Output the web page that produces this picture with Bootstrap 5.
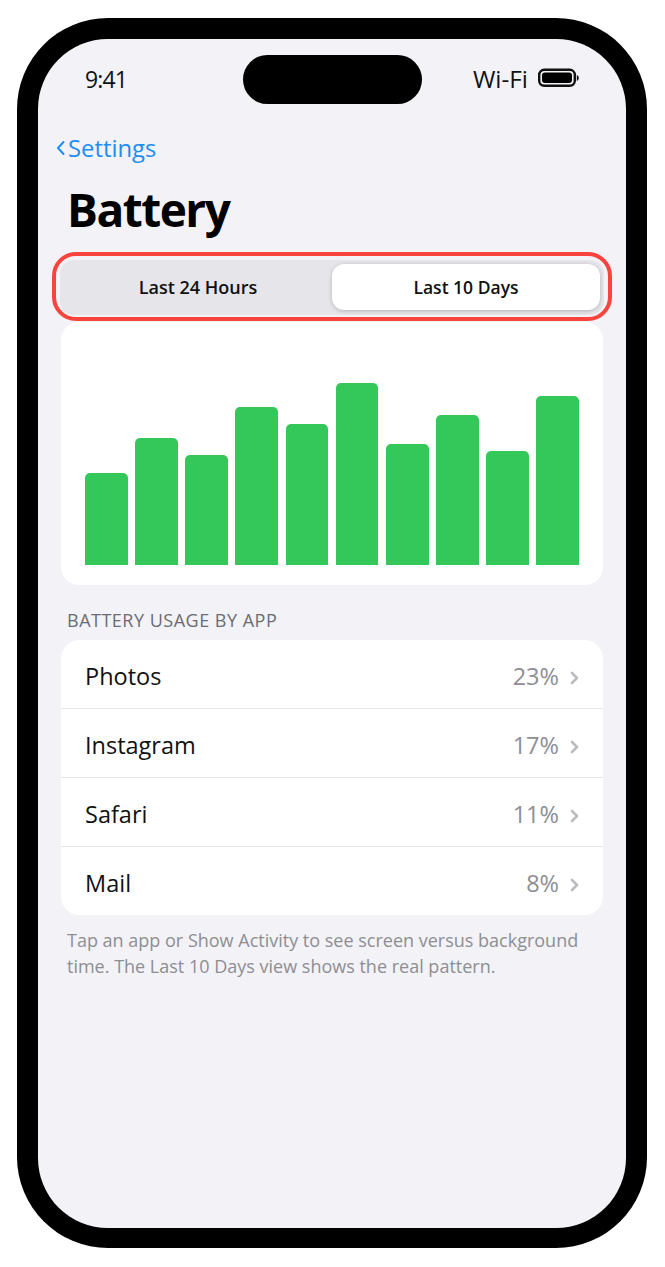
<!DOCTYPE html>
<html lang="en">
<head>
    <meta charset="UTF-8">
    <title>Battery</title>
    <link href="https://cdn.jsdelivr.net/npm/bootstrap@5.3.3/dist/css/bootstrap.min.css" rel="stylesheet">
    <style>
        html, body { height: 100%; }
        body {
            background: #fff;
            font-family: "Open Sans", "Noto Sans", "Liberation Sans", sans-serif;
            overflow: hidden;
        }
        .phone-frame {
            width: 630px;
            height: 1230px;
            margin: 18px 0 0 17px;
            background: #000;
            border-radius: 91px;
            padding: 21px 21px 20px;
        }
        .phone-screen {
            height: 100%;
            background: #f2f2f7;
            border-radius: 70px;
            overflow: hidden;
        }
        .status-row {
            height: 64px;
            margin-top: 8px;
            padding: 0 47px;
            font-size: 23px;
            font-weight: 500;
            color: #111;
        }
        .status-time { width: 158px; letter-spacing: -0.9px; }
        .notch-pill {
            width: 179px;
            height: 49px;
            background: #000;
            border-radius: 25px;
        }
        .status-right { margin-left: auto; gap: 10px; font-size: 24.3px; }
        .status-right svg { margin-bottom: 3px; }
        .back-link {
            margin: 20px 0 0 18px;
            font-size: 23.8px;
            line-height: 34px;
            color: #1c8ef5;
            gap: 3px;
        }
        .page-title {
            margin: 13px 0 0 29px;
            font-size: 46px;
            line-height: 62px;
            font-weight: 700;
            color: #000;
            letter-spacing: -1.5px;
        }
        .seg-wrap {
            position: relative;
            margin: 20px 22px 0 22px;
            height: 55px;
            background: #e5e5ea;
            border-radius: 14px;
            padding: 4px 4px 5px 0;
        }
        .seg-ring {
            position: absolute;
            left: -8px;
            right: -8px;
            top: -8px;
            bottom: -6px;
            border: 4px solid #f8443c;
            border-radius: 24px;
        }
        .seg-off, .seg-on {
            flex: 1 1 0;
            font-weight: 600;
            color: #111;
            border-radius: 12px;
        }
        .seg-off { padding-left: 4px; font-size: 18px; }
        .seg-on {
            flex: 0 0 268px;
            font-size: 17.5px;
            background: #fff;
            box-shadow: 0 1px 4px rgba(0, 0, 0, .22);
        }
        .chart-card {
            margin: 7px 23px 0;
            height: 263px;
            background: #fff;
            border-radius: 18px;
            padding: 0 24px 20px;
            gap: 7.3px;
        }
        .chart-bar {
            flex: 1 1 0;
            background: #34c759;
            border-radius: 5px 5px 0 0;
        }
        .section-label {
            margin: 23px 0 0 29px;
            font-size: 18px;
            line-height: 24px;
            letter-spacing: .5px;
            color: #6c6c72;
        }
        .usage-list {
            margin: 8px 23px 0;
            border-radius: 18px;
            overflow: hidden;
            --bs-list-group-border-color: #e5e5ea;
        }
        .usage-list .list-group-item {
            height: 69px;
            padding: 5px 24px 0;
            font-size: 23.5px;
            color: #111;
            border-left: 0;
            border-right: 0;
        }
        .usage-list .list-group-item:first-child { border-top: 0; }
        .usage-list .list-group-item:last-child { height: 68px; border-bottom: 0; }
        .usage-pct { color: #8e8e93; margin-left: auto; }
        .usage-arrow { margin-left: 11px; margin-top: 3px; }
        .foot-note {
            margin: 12px 30px 0 29px;
            font-size: 18px;
            line-height: 26px;
            color: #8e8e93;
        }
    </style>
</head>
<body>
    <div class="phone-frame">
        <div class="phone-screen d-flex flex-column">
            <div class="status-row d-flex align-items-center">
                <span class="status-time">9:41</span>
                <div class="notch-pill"></div>
                <div class="status-right d-flex align-items-center">
                    <span>Wi-Fi</span>
                    <svg width="41" height="20" viewBox="0 0 41 20">
                        <rect x="1.2" y="1.8" width="35.6" height="16" rx="5" fill="none" stroke="#111" stroke-width="2.4"/>
                        <rect x="4" y="4.5" width="30" height="10.6" rx="3" fill="#000"/>
                        <path d="M38.8 7v6c1.2-.4 2-1.6 2-3s-.8-2.600-2-3z" fill="#111"/>
                    </svg>
                </div>
            </div>

            <div class="back-link d-flex align-items-center">
                <svg width="9" height="16" viewBox="0 0 9 16"><path d="M7.500 2 2 8l5.500 6" fill="none" stroke="#1c8ef5" stroke-width="2" stroke-linecap="round" stroke-linejoin="round"/></svg>
                <span>Settings</span>
            </div>

            <div class="page-title">Battery</div>

            <div class="seg-wrap d-flex">
                <div class="seg-ring"></div>
                <div class="seg-off d-flex align-items-center justify-content-center">Last 24 Hours</div>
                <div class="seg-on d-flex align-items-center justify-content-center">Last 10 Days</div>
            </div>

            <div class="chart-card d-flex align-items-end">
                <div class="chart-bar" style="height: 92px"></div>
                <div class="chart-bar" style="height: 127px"></div>
                <div class="chart-bar" style="height: 110px"></div>
                <div class="chart-bar" style="height: 158px"></div>
                <div class="chart-bar" style="height: 141px"></div>
                <div class="chart-bar" style="height: 182px"></div>
                <div class="chart-bar" style="height: 121px"></div>
                <div class="chart-bar" style="height: 150px"></div>
                <div class="chart-bar" style="height: 114px"></div>
                <div class="chart-bar" style="height: 169px"></div>
            </div>

            <div class="section-label">BATTERY USAGE BY APP</div>

            <ul class="list-group usage-list">
                <li class="list-group-item d-flex align-items-center">Photos<span class="usage-pct">23%</span>
                    <svg class="usage-arrow" width="9" height="14" viewBox="0 0 9 14"><path d="M2 2l5 5-5 5" fill="none" stroke="#bcbcc0" stroke-width="2.600" stroke-linecap="round" stroke-linejoin="round"/></svg></li>
                <li class="list-group-item d-flex align-items-center">Instagram<span class="usage-pct">17%</span>
                    <svg class="usage-arrow" width="9" height="14" viewBox="0 0 9 14"><path d="M2 2l5 5-5 5" fill="none" stroke="#bcbcc0" stroke-width="2.600" stroke-linecap="round" stroke-linejoin="round"/></svg></li>
                <li class="list-group-item d-flex align-items-center">Safari<span class="usage-pct">11%</span>
                    <svg class="usage-arrow" width="9" height="14" viewBox="0 0 9 14"><path d="M2 2l5 5-5 5" fill="none" stroke="#bcbcc0" stroke-width="2.600" stroke-linecap="round" stroke-linejoin="round"/></svg></li>
                <li class="list-group-item d-flex align-items-center">Mail<span class="usage-pct">8%</span>
                    <svg class="usage-arrow" width="9" height="14" viewBox="0 0 9 14"><path d="M2 2l5 5-5 5" fill="none" stroke="#bcbcc0" stroke-width="2.600" stroke-linecap="round" stroke-linejoin="round"/></svg></li>
            </ul>

            <div class="foot-note">Tap an app or Show Activity to see screen versus background time. The Last 10 Days view shows the real pattern.</div>
        </div>
    </div>
    <script src="https://cdn.jsdelivr.net/npm/bootstrap@5.3.3/dist/js/bootstrap.bundle.min.js"></script>
</body>
</html>
